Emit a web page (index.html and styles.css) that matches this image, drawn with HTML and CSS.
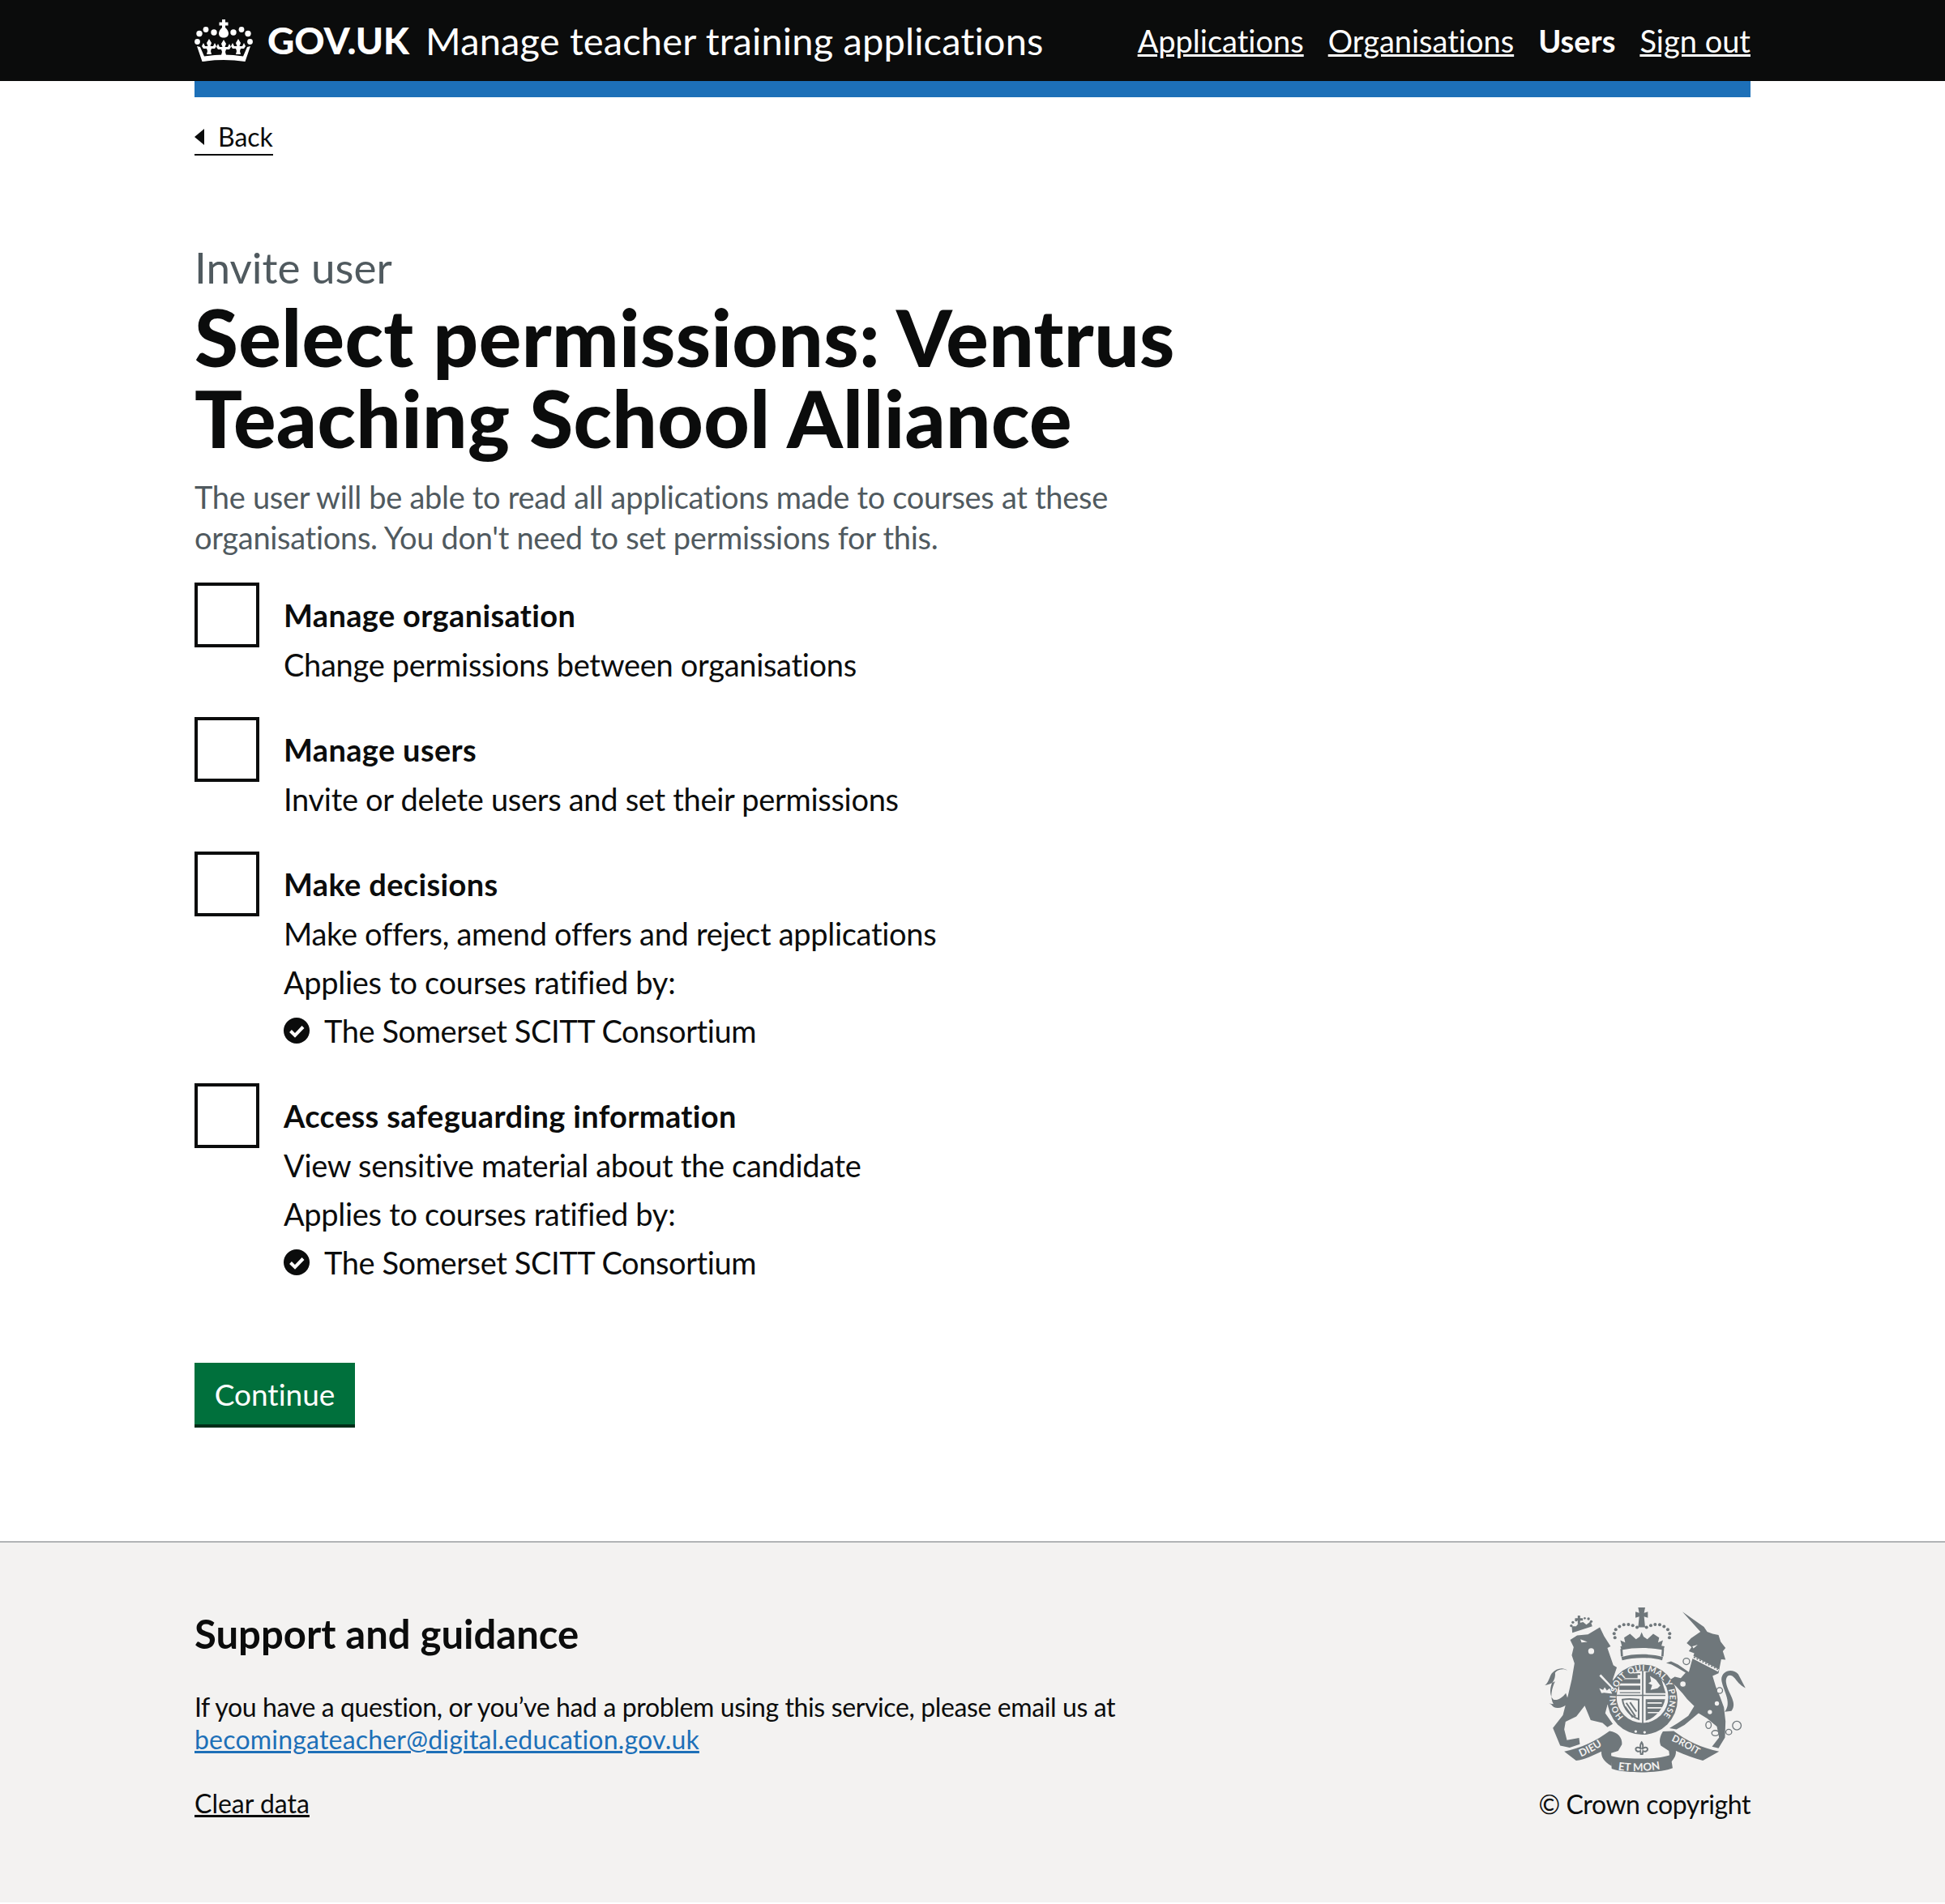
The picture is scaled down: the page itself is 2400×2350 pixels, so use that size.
FILE: index.html
```html
<!DOCTYPE html>
<html lang="en">
<head>
    <meta charset="UTF-8">
    <title>Select permissions - Manage teacher training applications</title>
    <link rel="stylesheet" href="styles.css">
</head>
<body>
    <header class="header">
        <div class="header-inner">
            <a class="logo" href="#">
                <svg class="crown" viewBox="0 0 72 52" aria-hidden="true">
                    <defs>
                        <path id="fleur" d="M0-10L3-5 1.500-1H5L7-5 9-1 7 2H3L2 5 3 9H-3L-2 5-3 2H-7L-9-1-7-5-5-1H-1.500L-3-5Z"/>
                    </defs>
                    <g fill="#fff">
                        <path d="M34 0h4v3.500h3.500v4H38V10c3 3 4 5 4 7.500 0 3-2.500 5-6 5s-6-2-6-5c0-2.500 1-4.500 4-7.500V7.500h-3.500v-4H34z"/>
                        <circle cx="6" cy="17.500" r="3.700"/><circle cx="14" cy="12.500" r="3.400"/><circle cx="24" cy="16" r="3.700"/>
                        <circle cx="48" cy="16" r="3.700"/><circle cx="58" cy="12.500" r="3.400"/><circle cx="66" cy="17.500" r="3.700"/>
                        <circle cx="3.500" cy="27.500" r="3.400"/><circle cx="68.500" cy="27.500" r="3.400"/>
                        <use href="#fleur" x="18" y="34"/><use href="#fleur" x="36" y="35"/><use href="#fleur" x="54" y="34"/>
                        <path d="M3 33l4 1 5 11.500q24-4 48 0L65 34l4-1-6.500 19q-26.500-4-53 0z"/>
                    </g>
                </svg>
                <span class="logo-text">GOV.UK</span>
            </a>
            <a class="service-name" href="#">Manage teacher training applications</a>
            <nav class="nav">
                <a href="#">Applications</a>
                <a href="#">Organisations</a>
                <a href="#" class="nav-current">Users</a>
                <a href="#">Sign out</a>
            </nav>
        </div>
    </header>

    <div class="container">
        <div class="blue-bar"></div>
        <a class="back-link" href="#"><span class="back-arrow"></span>Back</a>

        <main class="main">
            <span class="caption">Invite user</span>
            <h1 class="heading">Select permissions: Ventrus Teaching School Alliance</h1>
            <p class="hint">The user will be able to read all applications made to courses at these organisations. You don't need to set permissions for this.</p>

            <div class="checkboxes">
                <div class="check-item">
                    <span class="check-box"></span>
                    <div class="check-body">
                        <div class="check-label">Manage organisation</div>
                        <div class="check-line">Change permissions between organisations</div>
                    </div>
                </div>
                <div class="check-item">
                    <span class="check-box"></span>
                    <div class="check-body">
                        <div class="check-label">Manage users</div>
                        <div class="check-line">Invite or delete users and set their permissions</div>
                    </div>
                </div>
                <div class="check-item">
                    <span class="check-box"></span>
                    <div class="check-body">
                        <div class="check-label">Make decisions</div>
                        <div class="check-line">Make offers, amend offers and reject applications</div>
                        <div class="check-line">Applies to courses ratified by:</div>
                        <div class="check-line ratifier">
                            <svg class="tick" viewBox="0 0 32 32" aria-hidden="true"><circle cx="16" cy="16" r="16" fill="#0b0c0c"/><path d="M8.500 16.500l5.500 5.500 10-10.500" fill="none" stroke="#fff" stroke-width="4"/></svg>
                            The Somerset SCITT Consortium
                        </div>
                    </div>
                </div>
                <div class="check-item">
                    <span class="check-box"></span>
                    <div class="check-body">
                        <div class="check-label">Access safeguarding information</div>
                        <div class="check-line">View sensitive material about the candidate</div>
                        <div class="check-line">Applies to courses ratified by:</div>
                        <div class="check-line ratifier">
                            <svg class="tick" viewBox="0 0 32 32" aria-hidden="true"><circle cx="16" cy="16" r="16" fill="#0b0c0c"/><path d="M8.500 16.500l5.500 5.500 10-10.500" fill="none" stroke="#fff" stroke-width="4"/></svg>
                            The Somerset SCITT Consortium
                        </div>
                    </div>
                </div>
            </div>

            <button class="button">Continue</button>
        </main>
    </div>

    <footer class="footer">
        <div class="footer-inner">
            <div class="footer-meta">
                <h2 class="footer-heading">Support and guidance</h2>
                <p class="footer-text">If you have a question, or you’ve had a problem using this service, please email us at <a class="footer-mail" href="#">becomingateacher@digital.education.gov.uk</a></p>
                <a class="footer-link" href="#">Clear data</a>
            </div>
            <div class="footer-crest">
                <svg class="crest" viewBox="60 60 780 640" role="img" aria-label="Royal coat of arms">
                    <defs>
                        <path id="garter-arc" d="M370 484A100 100 0 1 1 512 484"/>
                        <path id="scroll-left" d="M212 632C250 616 285 596 316 570"/>
                        <path id="scroll-mid" d="M350 680C400 688 480 686 526 672"/>
                        <path id="scroll-right" d="M546 572C585 590 620 610 658 634"/>
                        <path id="crest-fleur" d="M0-22C-7-12-6-4-2 4-8-4-20-6-22 3-22 12-12 14-5 10L-3 22H3L5 10C12 14 22 12 22 3 20-6 8-4 2 4 6-4 7-12 0-22Z"/>
                    </defs>
                    <g fill="#6f777b">
                        <!-- lion -->
                        <path d="M172 198L198 182 238 178 282 152 298 185 322 222 310 228 332 292 345 300 330 345 335 440 320 425 310 440 302 470 330 510 310 522 292 506 248 496 226 442 195 482 155 502 150 530 160 570 205 562 208 585 170 598 135 590 108 525 145 478 165 400 178 345 188 285 178 255 185 225Z"/>
                        <path d="M168 432c-28 24-56 24-66 6l-8-4 16 2c-14-26-6-58 6-84-8 4-24 14-38 14 14-8 18-34 26-44 16-18 42-24 58-10-12-8-34-6-46 8 2 16-4 30-12 40-8 22-8 46 6 60 16 4 32-6 46-24z"/>
                        <!-- lion crown -->
                        <path d="M180 172L254 148 248 130 232 142 220 132 204 136 194 148 178 148Z"/>
                        <path d="M200 108h9v10h10v9h-10v12h-9v-12h-10v-9h10z"/>
                        <circle cx="176" cy="146" r="5"/><circle cx="182" cy="133" r="5"/><circle cx="194" cy="126" r="4"/><circle cx="226" cy="118" r="4"/><circle cx="240" cy="120" r="5"/><circle cx="250" cy="130" r="5"/>
                        <!-- central crown -->
                        <path d="M428 98L424 78H450L446 98 460 94V116L446 112 450 152H424L428 112 414 116V94Z"/>
                        <path d="M358 222c50-10 110-10 164 0l-4 14c-50-10-106-10-156 0z"/>
                        <path d="M364 222L358 200 376 208 372 190 394 176 416 196 430 186 437 170 444 186 458 196 480 176 502 190 498 208 516 200 510 222Z"/>
                        <path d="M362 262c42-14 112-14 154 0l-3 12c-42-12-106-12-148 0z"/>
                        <path d="M358 232h8l2 28h-8zM512 232h8l-2 28h-8z"/>
                        <circle cx="338" cy="190" r="6"/><circle cx="335" cy="175" r="6"/><circle cx="341" cy="160" r="6"/><circle cx="355" cy="149" r="6"/><circle cx="371" cy="142" r="6"/><circle cx="388" cy="141" r="6"/><circle cx="404" cy="145" r="6"/><circle cx="420" cy="152" r="6"/>
                        <circle cx="540" cy="190" r="6"/><circle cx="541" cy="175" r="6"/><circle cx="534" cy="160" r="6"/><circle cx="520" cy="149" r="6"/><circle cx="504" cy="142" r="6"/><circle cx="487" cy="141" r="6"/><circle cx="471" cy="145" r="6"/><circle cx="455" cy="152" r="6"/>
                        <!-- unicorn -->
                        <path d="M588 94L668 150 680 168 700 176 722 180 730 205 748 228 738 240 748 272 732 270 722 322 700 332 712 372 728 410 742 448 748 500 746 560 722 600 698 594 724 560 716 520 680 490 648 470 622 492 596 514 566 530 540 526 572 506 610 480 632 444 606 418 590 398 566 372 540 348 560 335 582 340 600 320 570 302 548 290 528 284 546 278 572 290 612 318 622 280 632 248 612 240 622 225 604 210 620 192 655 168Z"/>
                        <path d="M745 465C775 430 735 380 733 345 733 315 770 300 795 325L822 377C800 365 790 350 782 340 765 320 748 330 750 355 755 395 795 430 770 462Z"/>
                        <!-- garter ring -->
                        <circle cx="440" cy="420" r="130"/>
                        <!-- scrolls -->
                        <path d="M150 612c60-12 120-40 168-76 30 4 48 24 46 50l-14 24-26 8 2 48c-30-16-40-36-38-54-30 14-62 30-94 34z"/>
                        <path d="M322 628c40 14 180 16 222-4l8 50c-50 20-180 20-226 2z"/>
                        <path d="M724 612c-60-12-122-40-168-76l-40 2c-10 16-16 34-8 52l30 20 6 44c10-10 22-26 20-44 36 16 70 28 100 36z"/>
                    </g>
                    <!-- light details on the beasts -->
                    <g fill="#f3f2f1">
                        <circle cx="250" cy="240" r="11"/>
                        <path d="M210 196l26 10-22 2zM286 326l48 52-4 4-50-50zM280 378l14 6 6-10 8 12 10-8 10 20-30-4-10 2zM625 222l20-6-16 14z"/>
                        <circle cx="690" cy="466" r="8"/><circle cx="716" cy="434" r="8"/>
                    </g>
                    <path d="M626 262L722 312" stroke="#f3f2f1" stroke-width="10" fill="none"/>
                    <path d="M630 262L720 308" stroke="#6f777b" stroke-width="5" stroke-dasharray="6 6" fill="none"/>
                    <circle cx="440" cy="410" r="96" fill="#f3f2f1"/>
                    <!-- shield quarters -->
                    <g fill="#6f777b">
                        <path d="M362 322h70v6h-70zM354 344h78v16h-78zM354 368h78v16h-78zM356 392h76v4h-76zM372 326h50v14h-50z"/>
                        <path d="M452 318l50 0 24 78h-74zm16 14l4 20-10 8 14 6-6 18 26-6 10-10-16-22z" fill-rule="evenodd"/>
                        <path d="M452 418h72c-6 34-36 70-72 80zM462 428h52v8h-52z"/>
                    </g>
                    <path d="M458 432h54M458 450h54M460 468h44" stroke="#f3f2f1" stroke-width="5"/>
                    <g fill="none" stroke="#6f777b" stroke-width="6">
                        <path d="M366 420c30-6 50 0 60 0v72c-30-10-56-40-60-72z"/>
                        <path d="M380 432l34 50M394 430l24 34M376 446l28 40"/>
                    </g>
                    <path d="M345 404h180M441 306v208" stroke="#6f777b" stroke-width="5"/>
                    <g fill="#f3f2f1" font-family="Lato, sans-serif" font-weight="700">
                        <text font-size="31"><textPath href="#garter-arc" textLength="462" lengthAdjust="spacing">HONI SOIT QUI MAL Y PENSE</textPath></text>
                        <text font-size="38"><textPath href="#scroll-left">DIEU</textPath></text>
                        <text font-size="40"><textPath href="#scroll-mid">ET MON</textPath></text>
                        <text font-size="36"><textPath href="#scroll-right">DROIT</textPath></text>
                    </g>
                    <!-- belt -->
                    <circle cx="415" cy="538" r="5" fill="#f3f2f1"/><circle cx="448" cy="541" r="5" fill="#f3f2f1"/>
                    <use href="#crest-fleur" x="437" y="600" fill="#f3f2f1" stroke="#6f777b" stroke-width="6"/>
                    <!-- chain -->
                    <g fill="#f3f2f1" stroke="#6f777b" stroke-width="4">
                        <ellipse cx="685" cy="514" rx="10" ry="13"/><ellipse cx="710" cy="544" rx="13" ry="10"/><ellipse cx="760" cy="540" rx="11" ry="10"/><circle cx="790" cy="516" r="16"/><circle cx="726" cy="386" r="11"/><circle cx="603" cy="278" r="12"/><circle cx="590" cy="362" r="12"/>
                    </g>
                </svg>
                <a class="copyright" href="#">© Crown copyright</a>
            </div>
        </div>
    </footer>
</body>
</html>
```

FILE: styles.css
```css
* {
    box-sizing: border-box;
}
body {
    margin: 0;
    color: #0b0c0c;
    background: #fff;
    font-family: Lato, sans-serif;
    font-size: 38px;
    line-height: 50px;
    font-variant-ligatures: none;
}
a {
    color: inherit;
}
.header {
    background: #0b0c0c;
    color: #fff;
    height: 100px;
}
.header-inner {
    width: 1920px;
    height: 100px;
    margin: 0 auto;
    display: flex;
    align-items: center;
}
.logo {
    display: flex;
    align-items: center;
    gap: 18px;
    text-decoration: none;
    margin-right: 20px;
}
.crown {
    width: 72px;
    height: 52px;
}
.logo-text {
    font-size: 46px;
    font-weight: 900;
}
.service-name {
    font-size: 47px;
    letter-spacing: 0.15px;
    text-decoration: none;
}
.nav {
    display: flex;
    gap: 30px;
    margin-left: auto;
}
.nav-current {
    font-weight: 700;
    text-decoration: none;
}
.container {
    width: 1920px;
    margin: 0 auto;
}
.blue-bar {
    height: 20px;
    background: #1d70b8;
}
.back-link {
    display: inline-flex;
    align-items: center;
    margin-top: 30px;
    font-size: 32px;
    line-height: 38px;
    padding-bottom: 2px;
    text-decoration: none;
    border-bottom: 2px solid #0b0c0c;
}
.back-arrow {
    width: 0;
    height: 0;
    margin-right: 17px;
    border-top: 10px solid transparent;
    border-bottom: 10px solid transparent;
    border-right: 12px solid #0b0c0c;
}
.main {
    padding-top: 108px;
    padding-bottom: 144px;
}
.caption {
    display: block;
    margin-bottom: 5px;
    color: #505a5f;
    font-size: 53px;
    line-height: 60px;
}
.heading {
    width: 1280px;
    margin: 0 0 23px;
    font-size: 98px;
    line-height: 100px;
    font-weight: 900;
    letter-spacing: 0.4px;
}
.hint {
    width: 1280px;
    margin: 0 0 31px;
    color: #505a5f;
    letter-spacing: -0.3px;
}
.check-item {
    display: flex;
    margin-bottom: 30px;
}
.check-box {
    flex: none;
    width: 80px;
    height: 80px;
    border: 4px solid #0b0c0c;
    margin-right: 30px;
}
.check-body {
    padding-top: 15px;
}
.check-label {
    font-weight: 700;
    margin-bottom: 11px;
    letter-spacing: 0.35px;
}
.check-line {
    margin-bottom: 10px;
    letter-spacing: -0.3px;
}
.ratifier {
    display: flex;
    align-items: center;
    gap: 18px;
    letter-spacing: -0.4px;
}
.tick {
    width: 32px;
    height: 32px;
}
.button {
    display: block;
    width: 198px;
    height: 76px;
    margin-top: 89px;
    border: 0;
    background: #00703c;
    color: #fff;
    box-shadow: 0 4px 0 #002d18;
    font-family: inherit;
    font-size: 37px;
    font-variant-ligatures: none;
}
.footer {
    border-top: 2px solid #b1b4b6;
    background: #f3f2f1;
    height: 446px;
}
.footer-inner {
    width: 1920px;
    margin: 0 auto;
    display: flex;
    justify-content: space-between;
    padding-top: 82px;
}
.footer-heading {
    margin: 0 0 41px;
    font-size: 49px;
    line-height: 60px;
}
.footer-text {
    width: 1280px;
    margin: 0 0 31px;
    font-size: 32px;
    line-height: 40px;
    letter-spacing: -0.38px;
}
.footer-mail {
    color: #1d70b8;
    letter-spacing: 0.2px;
}
.footer-link {
    font-size: 32px;
    line-height: 40px;
}
.footer-crest {
    display: flex;
    flex-direction: column;
    align-items: flex-end;
    margin-top: -8px;
}
.crest {
    width: 260px;
    height: 213px;
}
.copyright {
    font-size: 32px;
    line-height: 40px;
    letter-spacing: -0.4px;
    text-decoration: none;
    margin-top: 16px;
}
```
